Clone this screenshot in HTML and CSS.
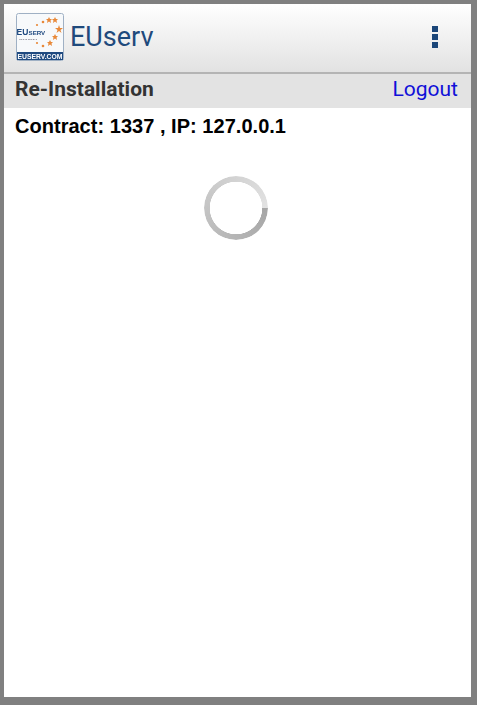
FILE: index.html
```html
<!DOCTYPE html>
<html lang="en">
   <head>
      <meta charset="UTF-8">
      <meta name="viewport" content="width=device-width, initial-scale=1.0">
      <title>EUserv</title>
      <link rel="stylesheet" href="styles.css">
   </head>
   <body>
      <div class="screen">
         <header class="app-bar">
            <div class="brand">
               <svg class="logo" width="48" height="48" viewBox="0 0 48 48">
                  <rect x="0.5" y="0.5" width="47" height="47" rx="2" fill="#f7f9fb" stroke="#9fb0c4"/>
                  <g fill="#e8893a">
                     <polygon points="43,12 44,15 47,15 44.500,17 45.500,20 43,18 40.500,20 41.500,17 39,15 42,15"/>
                     <polygon points="39,21 40,23 42,23 40.500,24.500 41,27 39,25.500 37,27 37.500,24.500 36,23 38,23"/>
                     <polygon points="34,27 35,29 37,29 35.500,30.500 36,33 34,31.500 32,33 32.500,30.500 31,29 33,29"/>
                     <polygon points="39,4 40,6 42,6 40.500,7.500 41,10 39,8.500 37,10 37.500,7.500 36,6 38,6"/>
                     <polygon points="33,4 34,6 36,6 34.500,7.500 35,10 33,8.500 31,10 31.500,7.500 30,6 32,6"/>
                     <circle cx="27" cy="9" r="1.300"/>
                     <circle cx="21" cy="12" r="1.100"/>
                     <circle cx="27" cy="33" r="1.300"/>
                     <circle cx="21" cy="30" r="1.100"/>
                  </g>
                  <text class="logo-eu" x="0.500" y="22">EU</text>
                  <text class="logo-serv" x="12.500" y="22">SERV</text>
                  <text class="logo-small" x="3" y="27">INTERNET</text>
                  <rect x="1" y="39" width="46" height="8" fill="#1f4a80"/>
                  <text class="logo-com" x="24" y="45.500" text-anchor="middle">EUSERV.COM</text>
               </svg>
               <span class="brand-name">EUserv</span>
            </div>
            <div class="menu-dots">
               <span></span>
               <span></span>
               <span></span>
            </div>
         </header>
         <div class="sub-bar">
            <span class="page-title">Re-Installation</span>
            <a class="logout" href="#">Logout</a>
         </div>
         <p class="contract">Contract: 1337 , IP: 127.0.0.1</p>
         <div class="loading">
            <div class="spinner"></div>
         </div>
      </div>
   </body>
</html>
```

FILE: styles.css
```css
html, body { height: 100%; }
body { margin: 0; background: #808080; padding: 4px 6px 8px 4px; box-sizing: border-box; font-family: "Liberation Sans", Arial, sans-serif; }
.screen { height: 100%; background: #fff; }
.app-bar { height: 68px; display: flex; align-items: center; justify-content: space-between; padding: 0 33px 0 12px; background: linear-gradient(#fff, #e2e2e2); border-bottom: 2px solid #b4b4b4; }
.brand { display: flex; align-items: center; gap: 6px; }
.logo { display: block; margin-top: -2px; filter: blur(0.3px); }
.logo text { font-family: "Liberation Sans", Arial, sans-serif; font-weight: 700; }
.logo-eu { font-size: 8.500px; fill: #1f4a80; }
.logo-serv { font-size: 6.200px; fill: #1f4a80; }
.logo-small { font-size: 2.500px; letter-spacing: 0.8px; fill: #556; }
.logo-com { font-size: 6.800px; fill: #fff; }
.brand-name { font-family: Roboto, sans-serif; font-size: 27px; color: #1f4a7c; margin-top: -2px; }
.menu-dots { display: flex; flex-direction: column; gap: 2px; margin-top: -2px; }
.menu-dots span { display: block; width: 6px; height: 6px; background: #1b4679; }
.sub-bar { height: 29px; display: flex; align-items: center; justify-content: space-between; padding: 0 13px 5px 11px; background: #e3e3e3; }
.page-title { font-family: Roboto, sans-serif; font-weight: 700; font-size: 21px; color: #333; }
.logout { font-family: Roboto, sans-serif; font-size: 21px; color: #1010d8; text-decoration: none; }
.contract { margin: 0; padding: 6px 11px 0; font-size: 20px; line-height: 24px; font-weight: 700; letter-spacing: 0.03px; color: #000; }
.loading { display: flex; justify-content: center; padding-top: 38px; }
.spinner { width: 64px; height: 64px; border-radius: 50%; transform: translateX(-2px); background: conic-gradient(from 90deg, #a6a6a6, #c4c4c4 50%, #e2e2e2); -webkit-mask: radial-gradient(circle closest-side, transparent 26px, #000 26.500px); mask: radial-gradient(circle closest-side, transparent 26px, #000 26.500px); }
```
